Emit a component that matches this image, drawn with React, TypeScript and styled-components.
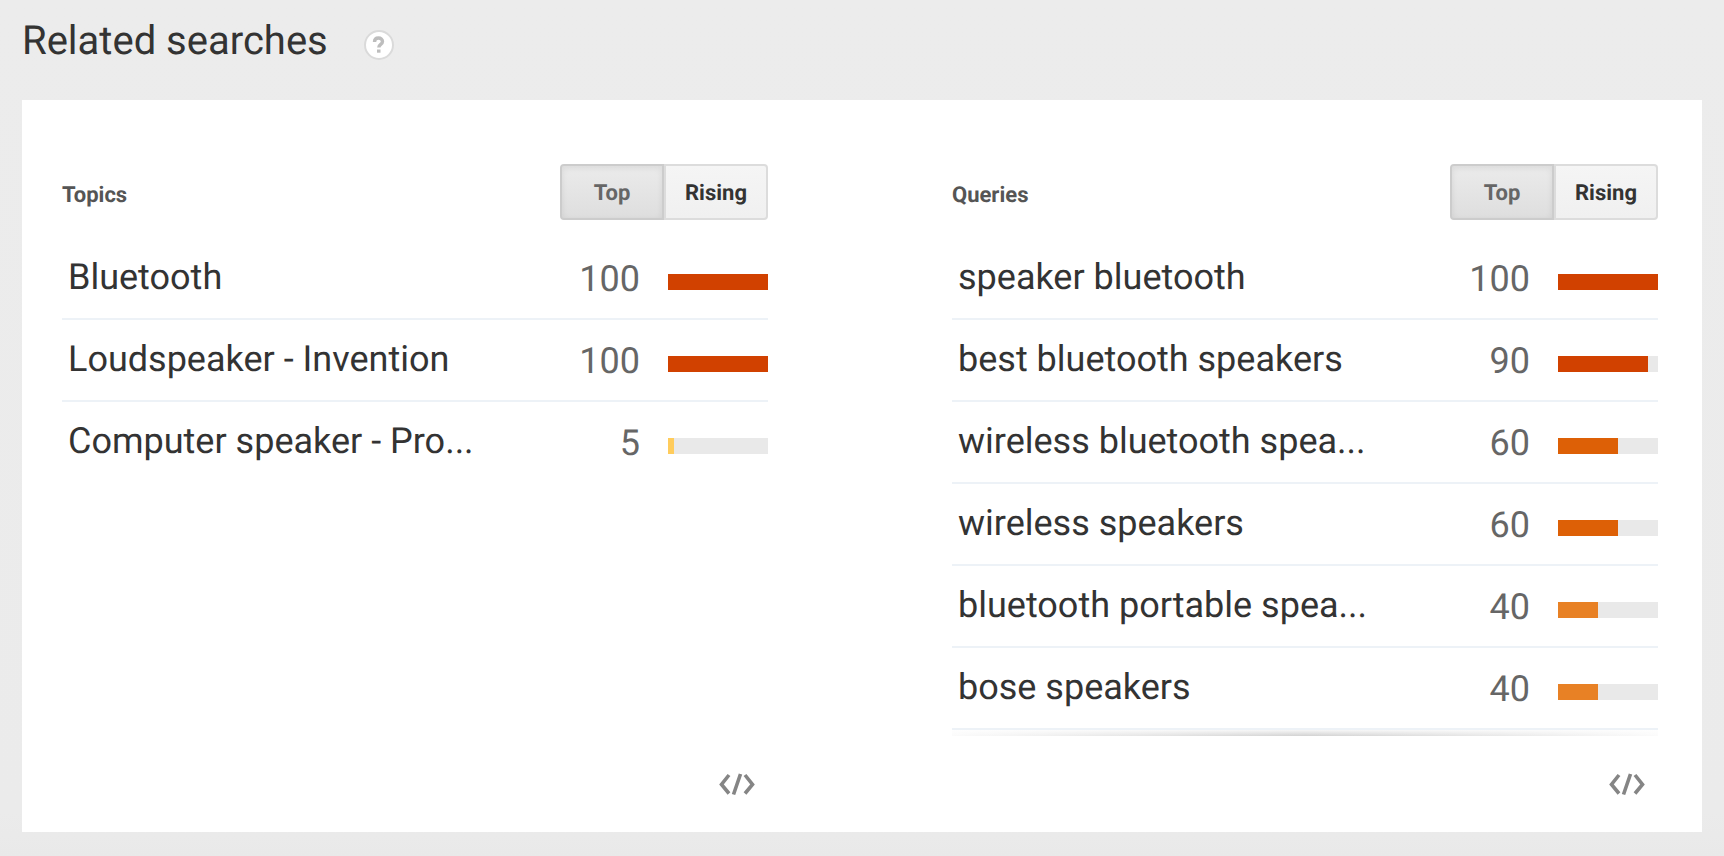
import React, { useState } from "react";
import styled, { createGlobalStyle } from "styled-components";

const GlobalStyle = createGlobalStyle`
  *, *::before, *::after { box-sizing: border-box; }
  body {
    margin: 0;
    background: #ebebeb;
    color: #333;
    font-family: Roboto, "Liberation Sans", sans-serif;
    text-rendering: geometricPrecision;
  }
`;

const Page = styled.main`
  padding: 0 22px 24px;
  background: linear-gradient(#ececec, #ebebeb 95%, #e9e9e9);
`;

const Header = styled.header`
  display: flex;
  align-items: center;
  gap: 36px;
  height: 100px;
  padding-bottom: 18px;
`;

const Title = styled.h1`
  margin: 0;
  font-size: 40px;
  line-height: 48px;
  font-weight: 400;
`;

const HelpButton = styled.button`
  width: 32px;
  height: 32px;
  margin-top: 8px;
  padding: 0;
  border: 0;
  background: none;
  cursor: pointer;

  svg { display: block; }
`;

const Card = styled.section`
  display: grid;
  grid-template-columns: 1fr 1fr;
  gap: 184px;
  padding: 64px 44px 24px 40px;
  background: #fff;
`;

const Panel = styled.section`
  display: flex;
  flex-direction: column;
  min-width: 0;
`;

const PanelHeader = styled.div`
  display: flex;
  justify-content: space-between;
  align-items: center;
  margin-bottom: 18px;
`;

const PanelTitle = styled.h2`
  margin: 0;
  padding-top: 8px;
  color: #555;
  font-size: 22px;
  line-height: 28px;
  font-weight: 700;
`;

const Segments = styled.div`
  display: flex;
`;

const Segment = styled.button<{ $active: boolean }>`
  width: 104px;
  height: 56px;
  padding: 4px 0 0;
  border: 2px solid ${(p) => (p.$active ? "#ccc" : "#dcdcdc")};
  background: ${(p) =>
    p.$active
      ? "linear-gradient(#ebebeb, #dedede)"
      : "linear-gradient(#f5f5f5, #f0f0f0)"};
  box-shadow: ${(p) => (p.$active ? "inset 0 2px 6px rgba(0, 0, 0, 0.08)" : "none")};
  color: ${(p) => (p.$active ? "#666" : "#333")};
  font: 700 22px/28px Roboto, "Liberation Sans", sans-serif;
  text-rendering: inherit;
  cursor: pointer;

  &:first-child { border-radius: 4px 0 0 4px; }
  &:last-child { border-radius: 0 4px 4px 0; }
`;

const Table = styled.table`
  width: 100%;
  table-layout: fixed;
  border-collapse: separate;
  border-spacing: 0;
`;

const Row = styled.tr<{ $divided: boolean }>`
  height: 82px;

  > * { border-bottom: 2px solid ${(p) => (p.$divided ? "#edf2f7" : "transparent")}; }
`;

const Name = styled.th`
  padding: 0 0 2px 6px;
  color: #333;
  font-size: 36px;
  line-height: 44px;
  font-weight: 400;
  text-align: left;
  white-space: nowrap;
`;

const Value = styled.td`
  padding: 2px 0 0;
  color: #666;
  font-size: 36px;
  line-height: 44px;
  text-align: right;
`;

const BarCell = styled.td`
  padding: 8px 0 0 28px;
`;

const Track = styled.div`
  height: 16px;
  background: #e9e9e9;
`;

const Fill = styled.div<{ $color: string }>`
  height: 100%;
  background: ${(p) => p.$color};
`;

const ScrollShadow = styled.div`
  height: 6px;
  background:
    linear-gradient(rgba(255, 255, 255, 0.8), rgba(255, 255, 255, 0)),
    linear-gradient(90deg, #fbfbfb, #d2d2d2 50%, #fbfbfb);
`;

const PanelFooter = styled.footer`
  display: flex;
  justify-content: flex-end;
  margin-top: auto;
  padding: 24px 6px 0 0;
`;

const EmbedButton = styled.button`
  width: 50px;
  height: 48px;
  padding: 0;
  border: 0;
  background: none;
  cursor: pointer;

  svg { display: block; margin: auto; }
`;

const ValueCol = styled.col`
  width: 100px;
`;

const BarCol = styled.col`
  width: 128px;
`;

type Item = { name: string; value: number };

const topics: Item[] = [
  { name: "Bluetooth", value: 100 },
  { name: "Loudspeaker - Invention", value: 100 },
  { name: "Computer speaker - Pro...", value: 5 },
];

const queries: Item[] = [
  { name: "speaker bluetooth", value: 100 },
  { name: "best bluetooth speakers", value: 90 },
  { name: "wireless bluetooth spea...", value: 60 },
  { name: "wireless speakers", value: 60 },
  { name: "bluetooth portable spea...", value: 40 },
  { name: "bose speakers", value: 40 },
];

const barColor = (value: number) => {
  if (value > 80) return "#d14100";
  if (value > 50) return "#dd6006";
  if (value > 20) return "#e88125";
  return "#ffcc5c";
};

// Bars grow in 2px steps, so small values stay visible.
const barWidth = (value: number) => Math.ceil(value / 2) * 2;

function RankedPanel({ title, items, scrollable = false }: { title: string; items: Item[]; scrollable?: boolean }) {
  const [mode, setMode] = useState("Top");
  return (
    <Panel>
      <PanelHeader>
        <PanelTitle>{title}</PanelTitle>
        <Segments role="group" aria-label={title}>
          {["Top", "Rising"].map((m) => (
            <Segment key={m} type="button" $active={m === mode} aria-pressed={m === mode} onClick={() => setMode(m)}>
              {m}
            </Segment>
          ))}
        </Segments>
      </PanelHeader>
      <Table aria-label={title}>
        <colgroup>
          <col />
          <ValueCol />
          <BarCol />
        </colgroup>
        <tbody>
          {items.map((item, i) => (
            <Row key={item.name} $divided={scrollable || i < items.length - 1}>
              <Name scope="row">{item.name}</Name>
              <Value>{item.value}</Value>
              <BarCell>
                <Track>
                  <Fill $color={barColor(item.value)} style={{ width: `${barWidth(item.value)}%` }} />
                </Track>
              </BarCell>
            </Row>
          ))}
        </tbody>
      </Table>
      {scrollable && <ScrollShadow />}
      <PanelFooter>
        <EmbedButton type="button" aria-label={`Embed ${title}`}>
          <svg width="38" height="24" viewBox="0 0 38 24" fill="none" stroke="#858585" strokeWidth="3.6">
            <path d="M11 3 3.500 12.500l7.500 9M27 3l7.500 9.500-7.500 9M22.500 2l-7 20.500" />
          </svg>
        </EmbedButton>
      </PanelFooter>
    </Panel>
  );
}

export default function App() {
  return (
    <>
      <GlobalStyle />
      <Page>
        <Header>
          <Title>Related searches</Title>
          <HelpButton type="button" aria-label="Help">
            <svg width="32" height="32" viewBox="0 0 32 32" fill="none">
              <circle cx="15" cy="16" r="14" fill="#fff" stroke="#dadada" strokeWidth="2" />
              <path d="M10.500 13c0-2.600 1.700-4 4-4s4 1.400 4 3.500c0 3-3.700 2.800-3.700 6" stroke="#bdbdbd" strokeWidth="3.400" />
              <path d="M13 20.500h3.500v3.200H13z" fill="#bdbdbd" />
            </svg>
          </HelpButton>
        </Header>
        <Card>
          <RankedPanel title="Topics" items={topics} />
          <RankedPanel title="Queries" items={queries} scrollable />
        </Card>
      </Page>
    </>
  );
}
